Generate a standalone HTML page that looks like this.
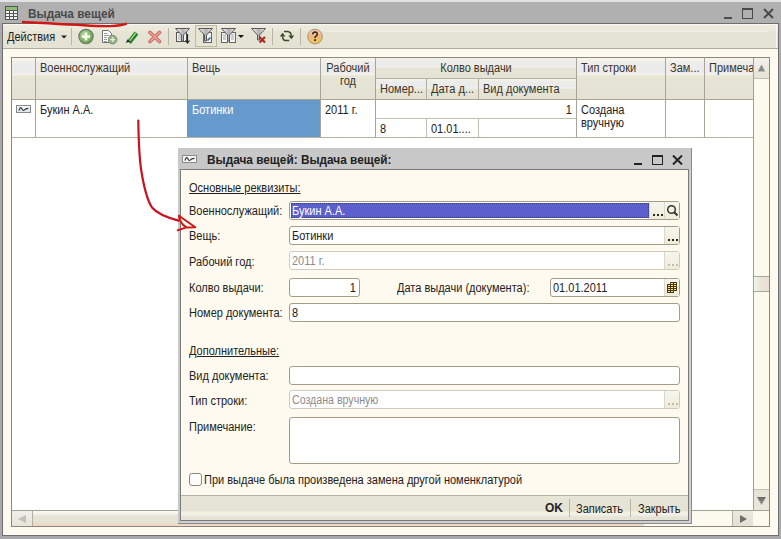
<!DOCTYPE html>
<html><head><meta charset="utf-8">
<style>
*{box-sizing:border-box;margin:0;padding:0}
html,body{width:781px;height:539px;overflow:hidden;background:#aaaaae}
body{position:relative;font-family:"Liberation Sans",sans-serif;font-size:11px;color:#222}
.a{position:absolute}
.t{position:absolute;white-space:nowrap;line-height:14px;font-size:12px;transform:scaleX(0.917);transform-origin:0 0}
.tc{transform-origin:50% 0}
.tr{transform-origin:100% 0}
.nb{transform:none}
.ln{position:absolute;background:#a8a494}
.fld{background:#fff;border:1px solid #a49c84;border-radius:3px}
.fld.dis{border-color:#d0ccbc}
.btn{background:linear-gradient(#f6f6f0,#eeecd8);border-left:1px solid #dcd8c4}
.btn .dots{position:absolute;left:3px;bottom:3px;width:10px;height:2px;background:linear-gradient(90deg,#2a2a20 2px,transparent 2px) 0 0/4px 2px repeat-x}
.btn.dis .dots{background:linear-gradient(90deg,#c0beb0 2px,transparent 2px) 0 0/4px 2px repeat-x}
</style></head><body>
<!-- main window frame -->
<div class="a" style="left:0;top:0;width:781px;height:2px;background:#e2e2e2"></div>
<div class="a" style="left:0;top:2px;width:781px;height:21px;background:#b0b0b0"></div>
<div class="a" style="left:2px;top:23px;width:777px;height:513px;background:#6e6e6e"></div>
<div class="a" id="body" style="left:3px;top:24px;width:775px;height:511px;background:#fefaf0"></div>
<div class="a" style="left:0;top:536px;width:781px;height:3px;background:#a8a8ac"></div>

<!-- title -->
<svg class="a" style="left:5px;top:6px" width="13" height="14" viewBox="0 0 13 14">
 <rect x="0.5" y="0.5" width="12" height="13" fill="#f4f4f4" stroke="#555"/>
 <rect x="1" y="1" width="11" height="3" fill="#8cc070"/>
 <path d="M1 4.5H12M1 7.5H12M1 10.5H12M4.5 4V13M8.5 4V13" stroke="#555" stroke-width="1"/>
</svg>
<div class="t" style="left:28px;top:7px;line-height:14px;font-weight:bold;font-size:12.5px;transform:scaleX(0.947);color:#4a4a4a">Выдача вещей</div>
<!-- window controls -->
<div class="a" style="left:724px;top:17px;width:8px;height:2px;background:#4a4a4a"></div>
<div class="a" style="left:742px;top:8px;width:11px;height:11px;border:1.5px solid #4a4a4a;border-top-width:2px"></div>
<svg class="a" style="left:763px;top:8px" width="11" height="11" viewBox="0 0 11 11"><path d="M1 1L10 10M10 1L1 10" stroke="#4a4a4a" stroke-width="2"/></svg>

<!-- toolbar -->
<div class="a" style="left:3px;top:24px;width:775px;height:24px;background:linear-gradient(#ecebdd 0px,#eae9db 7px,#e5e4d5 7px,#e4e3d3 24px)"></div>
<div class="a" style="left:3px;top:48px;width:775px;height:1px;background:#b0ac9a"></div>
<div class="a" style="left:3px;top:24px;width:775px;height:1px;background:#f8f8f2"></div>
<div class="a" style="left:776px;top:24px;width:1px;height:24px;background:#f6f6f0"></div>
<div class="a" style="left:326px;top:31px;width:441px;height:1px;background:linear-gradient(90deg,#fafaf4 1px,transparent 1px) 0 0/2px 1px repeat-x"></div>
<div class="t" style="left:7px;top:30px">Действия</div>
<svg class="a" style="left:61px;top:35px" width="6" height="4"><path d="M0 0.5H6L3 3.5Z" fill="#222"/></svg>
<div class="a" style="left:71px;top:28px;width:1px;height:17px;background:#b8b6a8"></div>

<!-- toolbar icons -->
<svg class="a" style="left:77px;top:28px" width="18" height="17" viewBox="0 0 18 17">
 <defs><radialGradient id="gp" cx="0.4" cy="0.35" r="0.7"><stop offset="0" stop-color="#b4dca0"/><stop offset="1" stop-color="#5e9a4a"/></radialGradient></defs>
 <circle cx="9" cy="8.6" r="7.2" fill="url(#gp)" stroke="#6a7868" stroke-width="1.1"/>
 <path d="M9 4.6V12.6M5 8.6H13" stroke="#f4fce8" stroke-width="2.6"/>
</svg>
<svg class="a" style="left:100px;top:28px" width="19" height="17" viewBox="0 0 19 17">
 <path d="M2.5 2.5H8.5L11.5 5.5V14.5H2.5Z" fill="#fff" stroke="#707070"/>
 <path d="M4 5.5H7.5M4 7.5H9.5M4 9.5H7M4 11.5H7M4 13.5H7" stroke="#9a9a9a"/>
 <circle cx="12.6" cy="11.6" r="4.3" fill="#96b48a" stroke="#7c8878"/>
 <path d="M12.6 9.2V14M10.2 11.6H15" stroke="#dff2d0" stroke-width="1.3"/>
</svg>
<svg class="a" style="left:124px;top:29px" width="15" height="15" viewBox="0 0 15 15">
 <path d="M5 13.5L12.5 4" stroke="#2e7e2e" stroke-width="4.6" stroke-linecap="butt"/>
 <path d="M5.2 12.3L11.8 3.9" stroke="#9ce48a" stroke-width="1.3"/>
 <path d="M1.8 13.8L3.6 10.2L6.5 12.4Z" fill="#1c2c1c"/>
</svg>
<svg class="a" style="left:147px;top:30px" width="15" height="14" viewBox="0 0 15 14">
 <path d="M3 2.5L12.5 11.5M12.5 2.5L3 11.5" stroke="#c86a62" stroke-width="3.6" stroke-linecap="round"/>
 <path d="M3 2.5L12.5 11.5M12.5 2.5L3 11.5" stroke="#f0a098" stroke-width="1.6" stroke-linecap="round"/>
</svg>
<div class="a" style="left:168px;top:28px;width:1px;height:17px;background:#b8b6a8"></div>
<!-- filter icons -->
<svg class="a" style="left:174px;top:27px" width="17" height="17" viewBox="0 0 17 17">
 <defs><linearGradient id="fg" x1="0" x2="1"><stop offset="0" stop-color="#fafafa"/><stop offset="0.55" stop-color="#b0b0b0"/><stop offset="0.8" stop-color="#d8d8d8"/><stop offset="1" stop-color="#f4f4f4"/></linearGradient></defs>
 <rect x="2.5" y="5.5" width="10" height="9" fill="#f4f4f4" stroke="#555"/>
 <path d="M4 8H7M4 10H7M4 12H7" stroke="#aaa"/>
 <path d="M1.5 1.5H15.5L9.5 8V14H7.5V8Z" fill="url(#fg)" stroke="#5a5a5a" stroke-width="1"/>
 <path d="M13.5 7V15.5M11.5 13.5L13.5 16L15.5 13.5" stroke="#222" stroke-width="1.2" fill="none"/>
</svg>
<div class="a" style="left:195px;top:25px;width:22px;height:22px;border:1px solid #bcb8a2;background:#e6e4d2"></div>
<svg class="a" style="left:197px;top:27px" width="17" height="17" viewBox="0 0 17 17">
 <rect x="6.5" y="5.5" width="8" height="10" fill="#eef2f6" stroke="#666"/>
 <path d="M1.5 1.5H15.5L9.5 8V14H7.5V8Z" fill="url(#fg)" stroke="#5a5a5a" stroke-width="1"/>
 <path d="M10.5 13.5L13.5 10.5" stroke="#3a6a9a" stroke-width="1.6"/>
</svg>
<svg class="a" style="left:220px;top:27px" width="17" height="17" viewBox="0 0 17 17">
 <rect x="1.5" y="5.5" width="6" height="10" fill="#f4f4f4" stroke="#666"/>
 <rect x="9.5" y="5.5" width="6" height="10" fill="#f4f4f4" stroke="#666"/>
 <path d="M3 8H6M3 10H6M3 12H6M11 8H14M11 10H14M11 12H14" stroke="#aaa"/>
 <path d="M1.5 1.5H15.5L9.5 8V14H7.5V8Z" fill="url(#fg)" stroke="#5a5a5a" stroke-width="1"/>
</svg>
<svg class="a" style="left:238px;top:35px" width="6" height="3"><path d="M0 0H6L3 3Z" fill="#111"/></svg>
<svg class="a" style="left:250px;top:27px" width="17" height="17" viewBox="0 0 17 17">
 <path d="M1.5 1.5H15.5L9.5 8V13H7.5V8Z" fill="url(#fg)" stroke="#5a5a5a" stroke-width="1"/>
 <path d="M9.5 10L15 15.5M15 10L9.5 15.5" stroke="#a82a20" stroke-width="2.2"/>
</svg>
<div class="a" style="left:272px;top:28px;width:1px;height:17px;background:#b8b6a8"></div>
<svg class="a" style="left:279px;top:29px" width="17" height="14" viewBox="0 0 17 14">
 <path d="M5 2.6H8.5Q11.9 2.8 12.3 6.6M10.2 11.5H6.6Q3.7 11.2 3.6 7.4" fill="none" stroke="#3a4828" stroke-width="1.5"/>
 <path d="M9.4 6.4H15.2L12.3 10.2Z M0.8 7.6H6.4L3.6 3.8Z" fill="#3a4828"/>
</svg>
<div class="a" style="left:300px;top:28px;width:1px;height:17px;background:#b8b6a8"></div>
<svg class="a" style="left:306px;top:28px" width="18" height="17" viewBox="0 0 18 17">
 <defs><linearGradient id="hg" x1="0" y1="0" x2="0" y2="1"><stop offset="0" stop-color="#f6d0b8"/><stop offset="0.5" stop-color="#f0b880"/><stop offset="1" stop-color="#f0c450"/></linearGradient></defs>
 <circle cx="9" cy="8.6" r="7.3" fill="url(#hg)" stroke="#a89070" stroke-width="1"/>
 <path d="M6.6 6.4Q6.8 4 9.1 4Q11.4 4.1 11.3 6.2Q11.2 7.6 9.6 8.4Q9 8.8 9 10" fill="none" stroke="#3a2a1a" stroke-width="1.6"/>
 <rect x="8.1" y="11.2" width="1.8" height="1.8" fill="#3a2a1a"/>
</svg>
<!-- TABLE -->
<div class="a" style="left:11px;top:57px;width:759px;height:470px;background:#fff;border:1px solid #8c887a"></div>
<!-- header bg -->
<div class="a" style="left:12px;top:58px;width:741px;height:41px;background:linear-gradient(#f8f7ee 0px,#f1f0ea 3px,#ececec 6px,#ececec 15px,#f4f4ee 16px,#e6e5d6 18px,#e4e3d3 41px)"></div>
<div class="ln" style="left:12px;top:99px;width:741px;height:1px"></div>
<div class="a" style="left:376px;top:58px;width:200px;height:20px;background:linear-gradient(#f4f3ec 0px,#eeeeea 2px,#ebebeb 4px,#ebebeb 8px,#f4f4ee 9px,#e5e4d5 10px,#e4e3d3 20px)"></div>
<div class="a" style="left:376px;top:79px;width:200px;height:20px;background:linear-gradient(#f4f3ec 0px,#eeeeea 2px,#ebebeb 4px,#ebebeb 8px,#f4f4ee 9px,#e5e4d5 10px,#e4e3d3 20px)"></div>
<!-- header vertical lines -->
<div class="ln" style="left:35px;top:58px;width:1px;height:79px;background:#a8a498"></div>
<div class="ln" style="left:187px;top:58px;width:1px;height:79px;background:#a8a498"></div>
<div class="ln" style="left:320px;top:58px;width:1px;height:79px;background:#a8a498"></div>
<div class="ln" style="left:375px;top:58px;width:1px;height:79px;background:#a8a498"></div>
<div class="ln" style="left:376px;top:78px;width:200px;height:1px;background:#b4b0a2"></div>
<div class="ln" style="left:426px;top:78px;width:1px;height:21px;background:#b4b0a2"></div>
<div class="ln" style="left:478px;top:78px;width:1px;height:21px;background:#b4b0a2"></div>
<div class="ln" style="left:576px;top:58px;width:1px;height:79px;background:#a8a498"></div>
<div class="ln" style="left:665px;top:58px;width:1px;height:79px;background:#a8a498"></div>
<div class="ln" style="left:704px;top:58px;width:1px;height:79px;background:#a8a498"></div>
<div class="a" style="left:187px;top:100px;width:133px;height:37px;background:#6699cc"></div>
<!-- row -->
<div class="ln" style="left:12px;top:137px;width:741px;height:1px;background:#b4b0a2"></div>
<div class="ln" style="left:376px;top:118px;width:200px;height:1px;background:#c4c0b4"></div>
<div class="ln" style="left:426px;top:118px;width:1px;height:19px;background:#c4c0b4"></div>
<div class="ln" style="left:478px;top:118px;width:1px;height:19px;background:#c4c0b4"></div>
<!-- header texts -->
<div class="t" style="left:40px;top:61px;color:#3a3428">Военнослужащий</div>
<div class="t" style="left:192px;top:61px;color:#3a3428">Вещь</div>
<div class="t tc" style="left:321px;top:61px;width:54px;text-align:center;color:#3a3428">Рабочий</div>
<div class="t tc" style="left:321px;top:74px;width:54px;text-align:center;color:#3a3428">год</div>
<div class="t tc" style="left:376px;top:61px;width:200px;text-align:center;color:#3a3428">Колво выдачи</div>
<div class="t" style="left:380px;top:82px;color:#3a3428">Номер...</div>
<div class="t" style="left:431px;top:82px;color:#3a3428">Дата д...</div>
<div class="t" style="left:483px;top:82px;color:#3a3428">Вид документа</div>
<div class="t" style="left:581px;top:61px;color:#3a3428">Тип строки</div>
<div class="t" style="left:670px;top:61px;color:#3a3428">Зам...</div>
<div class="t" style="left:709px;top:61px;width:48px;overflow:hidden;color:#3a3428">Примечание</div>
<!-- row texts -->
<svg class="a" style="left:16px;top:105px" width="15" height="8" viewBox="0 0 15 8"><defs><linearGradient id="wg" x1="0" y1="0" x2="0" y2="1"><stop offset="0" stop-color="#fafafa"/><stop offset="1" stop-color="#dce4f0"/></linearGradient></defs><rect x="0.5" y="0.5" width="14" height="7" fill="url(#wg)" stroke="#888"/><path d="M3 5.5C4 1.8 5.2 2 6 4S7.5 5.8 9 4.5C10 3.5 11 3.3 12.5 3.3" fill="none" stroke="#3a3a40" stroke-width="1.2"/></svg>
<div class="t" style="left:40px;top:103px">Букин А.А.</div>
<div class="t" style="left:192px;top:103px;color:#fff">Ботинки</div>
<div class="t" style="left:325px;top:103px">2011 г.</div>
<div class="t tr" style="left:376px;top:103px;width:196px;text-align:right">1</div>
<div class="t" style="left:380px;top:122px">8</div>
<div class="t" style="left:431px;top:122px">01.01....</div>
<div class="t" style="left:581px;top:103px">Создана</div>
<div class="t" style="left:581px;top:116px">вручную</div>
<!-- vertical scrollbar -->
<div class="a" style="left:753px;top:58px;width:16px;height:452px;background:#fcf9ef"></div>
<div class="ln" style="left:753px;top:58px;width:1px;height:468px;background:#a4a090"></div>
<div class="a" style="left:754px;top:58px;width:15px;height:20px;background:linear-gradient(#f2f2ee,#e4e3d4)"></div>
<div class="ln" style="left:754px;top:78px;width:15px;height:1px;background:#c4c0b0"></div>
<svg class="a" style="left:757px;top:64px" width="9" height="8"><path d="M4.5 0.5L8.2 7.5H0.8Z" fill="#8c8c8c"/></svg>
<div class="a" style="left:754px;top:276px;width:15px;height:16px;border-top:1px solid #aca898;border-bottom:1px solid #aca898;background:linear-gradient(90deg,#f4f4ea,#e8e6d6 40%,#eedcd2)"></div>
<div class="a" style="left:754px;top:489px;width:15px;height:21px;background:linear-gradient(#e4e3d4,#e8e8dc)"></div>
<div class="ln" style="left:754px;top:489px;width:15px;height:1px;background:#c4c0b0"></div>
<svg class="a" style="left:757px;top:497px" width="9" height="8"><defs><linearGradient id="tg" x1="0" y1="0" x2="0" y2="1"><stop offset="0" stop-color="#666"/><stop offset="1" stop-color="#9a9a9a"/></linearGradient></defs><path d="M0 0H9L4.5 8Z" fill="url(#tg)"/></svg>
<!-- horizontal scrollbar -->
<div class="ln" style="left:12px;top:510px;width:757px;height:1px;background:#a4a090"></div>
<div class="a" style="left:12px;top:511px;width:757px;height:15px;background:#fcf9ef"></div>
<div class="a" style="left:12px;top:511px;width:20px;height:15px;background:linear-gradient(#f0f0ea,#e6e5d8)"></div>
<svg class="a" style="left:18px;top:515px" width="8" height="8"><path d="M0 4L8 0V8Z" fill="#c0c0c0"/></svg>
<div class="ln" style="left:32px;top:511px;width:1px;height:15px;background:#b4b0a2"></div>
<div class="a" style="left:33px;top:511px;width:611px;height:15px;background:linear-gradient(#fafaf6 0px,#f2f2ea 3px,#e4e3d4 5px,#e4e3d4 11px,#ecd8c8 13px,#f0d8c8 15px)"></div>
<div class="ln" style="left:732px;top:511px;width:1px;height:15px;background:#b4b0a2"></div>
<div class="a" style="left:733px;top:511px;width:20px;height:15px;background:linear-gradient(#e8e8dc,#e2e1d2)"></div>
<svg class="a" style="left:740px;top:515px" width="7" height="8"><path d="M0 0L7 4L0 8Z" fill="#6e6e6e"/></svg>

<!-- DIALOG -->
<div class="a" style="left:178px;top:148px;width:514px;height:376px;background:#c8c8c8"></div>
<div class="a" style="left:691px;top:148px;width:1px;height:376px;background:#8a8a8a"></div>
<div class="a" style="left:178px;top:523px;width:514px;height:1px;background:#8a8a8a"></div>
<div class="a" style="left:180px;top:169px;width:509px;height:352px;background:#7a7a7a"></div>
<div class="a" style="left:689px;top:169px;width:2px;height:354px;background:#d0d0d4"></div>
<div class="a" style="left:180px;top:521px;width:511px;height:2px;background:#d0d0d4"></div>
<div class="a" style="left:181px;top:170px;width:507px;height:350px;background:#fefaf0"></div>
<!-- dialog title -->
<svg class="a" style="left:182px;top:155px" width="15" height="8" viewBox="0 0 15 8"><rect x="0.5" y="0.5" width="14" height="7" fill="#f6f6f6" stroke="#8c8c8c"/><path d="M3 5.5C4 1.8 5.2 2 6 4S7.5 5.8 9 4.5C10 3.5 11 3.3 12.5 3.3" fill="none" stroke="#3a3a3a" stroke-width="1.2"/></svg>
<div class="t" style="left:207px;top:153px;line-height:14px;font-weight:bold;font-size:12.5px;transform:scaleX(0.946);color:#222">Выдача вещей: Выдача вещей:</div>
<div class="a" style="left:634px;top:163px;width:8px;height:2px;background:#222"></div>
<div class="a" style="left:652px;top:155px;width:11px;height:10px;border:1.5px solid #222;border-top-width:2px"></div>
<svg class="a" style="left:672px;top:155px" width="11" height="10" viewBox="0 0 11 10"><path d="M1 0.5L10 9.5M10 0.5L1 9.5" stroke="#222" stroke-width="2"/></svg>
<!-- labels -->
<div class="t" style="left:189px;top:181px;text-decoration:underline">Основные реквизиты:</div>
<div class="t" style="left:189px;top:204px">Военнослужащий:</div>
<div class="t" style="left:189px;top:229px">Вещь:</div>
<div class="t" style="left:189px;top:255px">Рабочий год:</div>
<div class="t" style="left:189px;top:281px">Колво выдачи:</div>
<div class="t" style="left:397px;top:281px">Дата выдачи (документа):</div>
<div class="t" style="left:189px;top:306px">Номер документа:</div>
<div class="t" style="left:189px;top:344px;text-decoration:underline">Дополнительные:</div>
<div class="t" style="left:189px;top:369px">Вид документа:</div>
<div class="t" style="left:189px;top:394px">Тип строки:</div>
<div class="t" style="left:189px;top:420px">Примечание:</div>
<!-- fields -->
<div class="a fld" style="left:289px;top:201px;width:391px;height:19px"></div>
<div class="a" style="left:291px;top:203px;width:358px;height:15px;background:#5b60cc;outline:1px dotted #333a80;outline-offset:-1px"></div>
<div class="t" style="left:292px;top:204px;color:#fff">Букин А.А.</div>
<div class="a btn" style="left:649px;top:202px;width:15px;height:17px"><span class="dots"></span></div>
<div class="a btn" style="left:664px;top:202px;width:15px;height:17px"></div>
<svg class="a" style="left:666px;top:204px" width="13" height="13" viewBox="0 0 13 13"><circle cx="5.5" cy="5.5" r="3.8" fill="none" stroke="#333" stroke-width="1.5"/><path d="M8.3 8.3L11.5 11.5" stroke="#333" stroke-width="2"/></svg>

<div class="a fld" style="left:289px;top:226px;width:391px;height:19px"></div>
<div class="t" style="left:292px;top:229px">Ботинки</div>
<div class="a btn" style="left:664px;top:227px;width:15px;height:17px"><span class="dots"></span></div>

<div class="a fld dis" style="left:289px;top:251px;width:391px;height:19px"></div>
<div class="t" style="left:292px;top:254px;color:#8c8c8c">2011 г.</div>
<div class="a btn dis" style="left:664px;top:252px;width:15px;height:17px"><span class="dots"></span></div>

<div class="a fld" style="left:289px;top:278px;width:71px;height:19px"></div>
<div class="t tr" style="left:289px;top:281px;width:67px;text-align:right">1</div>
<div class="a fld" style="left:550px;top:278px;width:130px;height:19px"></div>
<div class="t" style="left:553px;top:281px">01.01.2011</div>
<div class="a btn" style="left:664px;top:279px;width:15px;height:17px"></div>
<svg class="a" style="left:666px;top:281px" width="12" height="13" viewBox="0 0 12 13">
 <rect x="4.5" y="1.5" width="6" height="8" fill="#f4e6a4" stroke="#4a3810"/>
 <path d="M4.5 3.5H10.5M4.5 5.5H10.5M4.5 7.5H10.5M7.5 1.5V9.5" stroke="#4a3810"/>
 <rect x="1.5" y="3.5" width="6" height="8" fill="#f4e6a4" stroke="#4a3810"/>
 <path d="M1.5 5.5H7.5M1.5 7.5H7.5M1.5 9.5H7.5M4.5 3.5V11.5" stroke="#4a3810"/>
</svg>

<div class="a fld" style="left:289px;top:303px;width:391px;height:19px"></div>
<div class="t" style="left:292px;top:306px">8</div>

<div class="a fld" style="left:289px;top:366px;width:391px;height:19px"></div>
<div class="a fld dis" style="left:289px;top:390px;width:391px;height:19px"></div>
<div class="t" style="left:292px;top:393px;color:#8c8c8c;transform:scaleX(0.885)">Создана вручную</div>
<div class="a btn dis" style="left:664px;top:391px;width:15px;height:17px"><span class="dots"></span></div>
<div class="a fld" style="left:289px;top:417px;width:391px;height:47px"></div>
<!-- checkbox -->
<div class="a" style="left:189px;top:473px;width:13px;height:13px;border:1px solid #8c8878;border-radius:3px;background:#fff"></div>
<div class="t" style="left:204px;top:473px">При выдаче была произведена замена другой номенклатурой</div>
<!-- footer -->
<div class="a" style="left:181px;top:495px;width:507px;height:1px;background:#b4b2a4"></div>
<div class="a" style="left:181px;top:496px;width:507px;height:24px;background:linear-gradient(#e6e5d6 0px,#e4e3d3 15px,#f4f2dc 16px,#f0f0ea 19px,#e4e3d4 21px,#e4e3d4 24px)"></div>
<div class="t nb" style="left:545px;top:501px;font-weight:bold;font-size:12px;color:#222">OK</div>
<div class="a" style="left:569px;top:499px;width:1px;height:18px;background:#b8b6a6"></div>
<div class="t" style="left:576px;top:502px">Записать</div>
<div class="a" style="left:630px;top:499px;width:1px;height:18px;background:#b8b6a6"></div>
<div class="t" style="left:638px;top:502px">Закрыть</div>

<!-- red annotations -->
<svg class="a" style="left:0;top:0" width="781" height="539" viewBox="0 0 781 539">
 <path d="M23 22C35 22.6 50 23.6 78 24.9C90 25.6 100 26.4 110 26.1C118 25.7 123 25 126 23.8" fill="none" stroke="#d01818" stroke-width="2.4" stroke-linecap="round"/>
 <path d="M138.3 120.5C138.6 140 139 156 141.2 170C143.5 185 146.5 199 152 207.5C157 213.5 165 217 178.5 220.6" fill="none" stroke="#c81420" stroke-width="2.2" stroke-linecap="round"/>
 <path d="M178.9 215.8L195.3 227.2L186.5 227.4L177.8 230.3M178.9 215.8C179.3 220 181 224 186.5 227.4" fill="none" stroke="#d01818" stroke-width="2" stroke-linejoin="round" stroke-linecap="round"/>
</svg>
</body></html>
